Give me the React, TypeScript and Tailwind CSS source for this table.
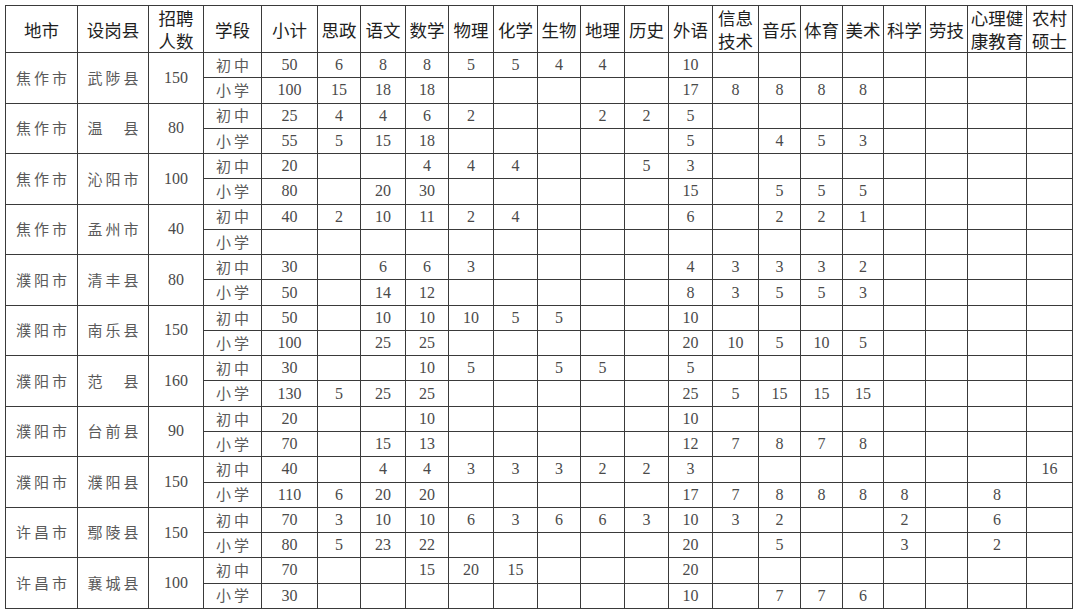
import React from 'react';

type Group = {
  city: string;
  county: string;
  total: string;
  rows: string[][];
};

const colWidths = [72, 71, 55, 58, 56, 43, 45, 43, 45, 44, 43, 44, 44, 44, 46, 42, 42, 41, 42, 42, 59, 46];

const headers: string[][] = [
  ['地市'],
  ['设岗县'],
  ['招聘', '人数'],
  ['学段'],
  ['小计'],
  ['思政'],
  ['语文'],
  ['数学'],
  ['物理'],
  ['化学'],
  ['生物'],
  ['地理'],
  ['历史'],
  ['外语'],
  ['信息', '技术'],
  ['音乐'],
  ['体育'],
  ['美术'],
  ['科学'],
  ['劳技'],
  ['心理健', '康教育'],
  ['农村', '硕士'],
];

// 小计, 思政, 语文, 数学, 物理, 化学, 生物, 地理, 历史, 外语, 信息, 音乐, 体育, 美术, 科学, 劳技, 心理, 农村
const row = (...v: (string | number)[]) => {
  const out = v.map((x) => String(x));
  while (out.length < 18) out.push('');
  return out;
};

const groups: Group[] = [
  {
    city: '焦作市', county: '武陟县', total: '150',
    rows: [
      row(50, 6, 8, 8, 5, 5, 4, 4, '', 10),
      row(100, 15, 18, 18, '', '', '', '', '', 17, 8, 8, 8, 8),
    ],
  },
  {
    city: '焦作市', county: '温　县', total: '80',
    rows: [
      row(25, 4, 4, 6, 2, '', '', 2, 2, 5),
      row(55, 5, 15, 18, '', '', '', '', '', 5, '', 4, 5, 3),
    ],
  },
  {
    city: '焦作市', county: '沁阳市', total: '100',
    rows: [
      row(20, '', '', 4, 4, 4, '', '', 5, 3),
      row(80, '', 20, 30, '', '', '', '', '', 15, '', 5, 5, 5),
    ],
  },
  {
    city: '焦作市', county: '孟州市', total: '40',
    rows: [
      row(40, 2, 10, 11, 2, 4, '', '', '', 6, '', 2, 2, 1),
      row(),
    ],
  },
  {
    city: '濮阳市', county: '清丰县', total: '80',
    rows: [
      row(30, '', 6, 6, 3, '', '', '', '', 4, 3, 3, 3, 2),
      row(50, '', 14, 12, '', '', '', '', '', 8, 3, 5, 5, 3),
    ],
  },
  {
    city: '濮阳市', county: '南乐县', total: '150',
    rows: [
      row(50, '', 10, 10, 10, 5, 5, '', '', 10),
      row(100, '', 25, 25, '', '', '', '', '', 20, 10, 5, 10, 5),
    ],
  },
  {
    city: '濮阳市', county: '范　县', total: '160',
    rows: [
      row(30, '', '', 10, 5, '', 5, 5, '', 5),
      row(130, 5, 25, 25, '', '', '', '', '', 25, 5, 15, 15, 15),
    ],
  },
  {
    city: '濮阳市', county: '台前县', total: '90',
    rows: [
      row(20, '', '', 10, '', '', '', '', '', 10),
      row(70, '', 15, 13, '', '', '', '', '', 12, 7, 8, 7, 8),
    ],
  },
  {
    city: '濮阳市', county: '濮阳县', total: '150',
    rows: [
      row(40, '', 4, 4, 3, 3, 3, 2, 2, 3, '', '', '', '', '', '', '', 16),
      row(110, 6, 20, 20, '', '', '', '', '', 17, 7, 8, 8, 8, 8, '', 8, ''),
    ],
  },
  {
    city: '许昌市', county: '鄢陵县', total: '150',
    rows: [
      row(70, 3, 10, 10, 6, 3, 6, 6, 3, 10, 3, 2, '', '', 2, '', 6, ''),
      row(80, 5, 23, 22, '', '', '', '', '', 20, '', 5, '', '', 3, '', 2, ''),
    ],
  },
  {
    city: '许昌市', county: '襄城县', total: '100',
    rows: [
      row(70, '', '', 15, 20, 15, '', '', '', 20),
      row(30, '', '', '', '', '', '', '', '', 10, '', 7, 7, 6),
    ],
  },
];

const cell = 'border border-[#3a3a3a] p-0 text-center align-middle';
const cjk = "font-['Noto_Sans_CJK_SC',sans-serif] text-[15px] text-[#5a5a5a] tracking-[3px] pl-[3px]";
const num = "font-['Liberation_Serif','Noto_Sans_CJK_SC',serif] text-[16px] text-[#4a4a4a]";

export default function App() {
  return (
    <div className="w-[1080px] h-[613px] bg-white pl-[5px] pt-[5px] overflow-hidden">
      <table className="border-collapse table-fixed w-[1067px]">
        <colgroup>
          {colWidths.map((w, i) => (
            <col key={i} style={{ width: w }} />
          ))}
        </colgroup>
        <thead>
          <tr className="h-[47px]">
            {headers.map((lines, i) => (
              <th
                key={i}
                className={`${cell} font-['Noto_Sans_CJK_SC',sans-serif] text-[17.5px] font-normal leading-[23px] text-[#1e1e1e]`}
              >
                {lines.map((l, j) => (
                  <div key={j}>{l}</div>
                ))}
              </th>
            ))}
          </tr>
        </thead>
        <tbody>
          {groups.map((g, gi) =>
            g.rows.map((r, ri) => (
              <tr key={`${gi}-${ri}`} className="h-[25.27px]">
                {ri === 0 && (
                  <>
                    <td rowSpan={2} className={`${cell} ${cjk}`}>{g.city}</td>
                    <td rowSpan={2} className={`${cell} ${cjk}`}>{g.county}</td>
                    <td rowSpan={2} className={`${cell} ${num}`}>{g.total}</td>
                  </>
                )}
                <td className={`${cell} ${cjk}`}>{ri === 0 ? '初中' : '小学'}</td>
                {r.map((v, vi) => (
                  <td key={vi} className={`${cell} ${num} leading-none`}>{v}</td>
                ))}
              </tr>
            ))
          )}
        </tbody>
      </table>
    </div>
  );
}
